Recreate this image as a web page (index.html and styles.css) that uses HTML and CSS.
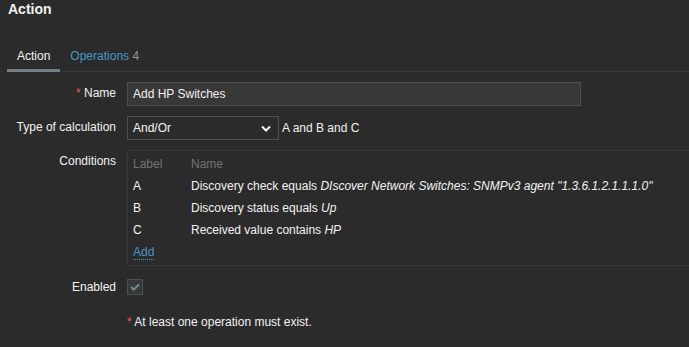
FILE: index.html
```html
<!DOCTYPE html>
<html lang="en">
<head>
    <meta charset="UTF-8">
    <title>Action</title>
    <link rel="stylesheet" href="styles.css">
</head>
<body>
    <h1 class="page-title">Action</h1>

    <ul class="tabs">
        <li class="tab active">Action</li>
        <li class="tab"><a href="#">Operations</a> <span class="count">4</span></li>
    </ul>

    <form class="action-form">
        <label class="form-label"><span class="req">*</span> Name</label>
        <div class="form-field">
            <input type="text" class="text-input" value="Add HP Switches">
        </div>

        <label class="form-label">Type of calculation</label>
        <div class="form-field inline">
            <div class="select-box">
                <span>And/Or</span>
                <svg class="chevron" width="10" height="7" viewBox="0 0 10 7"><path d="M1 1.5 L5 5.5 L9 1.5" fill="none" stroke="#f2f2f2" stroke-width="2"/></svg>
            </div>
            <span class="calc-formula">A and B and C</span>
        </div>

        <label class="form-label cond-label">Conditions</label>
        <div class="form-field">
            <div class="conditions">
                <table>
                    <tr class="head"><td class="col-label">Label</td><td>Name</td></tr>
                    <tr><td class="col-label">A</td><td>Discovery check equals <i>DIscover Network Switches: SNMPv3 agent "1.3.6.1.2.1.1.1.0"</i></td></tr>
                    <tr><td class="col-label">B</td><td>Discovery status equals <i>Up</i></td></tr>
                    <tr><td class="col-label">C</td><td>Received value contains <i>HP</i></td></tr>
                    <tr><td class="col-label"><a href="#" class="add-link">Add</a></td><td></td></tr>
                </table>
            </div>
        </div>

        <label class="form-label enabled-label">Enabled</label>
        <div class="form-field enabled-field">
            <span class="checkbox">
                <svg width="10" height="8" viewBox="0 0 10 8"><path d="M1 4 L3.8 6.6 L9 1.4" fill="none" stroke="#768d99" stroke-width="2"/></svg>
            </span>
        </div>

        <div></div>
        <div class="form-note"><span class="req">*</span> At least one operation must exist.</div>
    </form>
</body>
</html>
```

FILE: styles.css
```css
body {
    margin: 0;
    background-color: #2b2b2b;
    color: #f2f2f2;
    font-family: "Liberation Sans", Arial, sans-serif;
    font-size: 12px;
    width: 689px;
    height: 347px;
    overflow: hidden;
}
.page-title {
    margin: 0;
    padding: 0 8px;
    font-size: 14px;
    line-height: 18px;
    font-weight: bold;
    color: #f2f2f2;
}
.tabs {
    list-style: none;
    margin: 26px 0 0 7px;
    padding: 0;
    display: flex;
    border-bottom: 1px solid #383838;
}
.tab {
    padding: 4px 10px 5px;
    line-height: 16px;
    border-bottom: 3px solid transparent;
    margin-bottom: -1px;
}
.tab.active {
    border-bottom-color: #6f7f88;
}
.tab a {
    color: #4796c4;
    text-decoration: none;
}
.tab .count {
    color: #8a9499;
}
.action-form {
    display: grid;
    grid-template-columns: 116px 1fr;
    column-gap: 11px;
    row-gap: 10px;
    margin-top: 10px;
}
.form-label {
    text-align: right;
    line-height: 23px;
}
.req {
    color: #e45959;
}
.form-field.inline {
    display: flex;
    align-items: center;
    gap: 3px;
}
.text-input {
    box-sizing: border-box;
    width: 454px;
    height: 24px;
    margin: 0;
    padding: 0 5px;
    background-color: #383838;
    border: 1px solid #4f4f4f;
    color: #f2f2f2;
    font-family: inherit;
    font-size: 12px;
}
.select-box {
    box-sizing: border-box;
    width: 152px;
    height: 24px;
    padding: 0 7px 0 5px;
    background-color: #2b2b2b;
    border: 1px solid #4f4f4f;
    display: flex;
    align-items: center;
    justify-content: space-between;
}
.conditions {
    border: 1px solid #383838;
    border-right: none;
    padding: 2px 0 2px 5px;
}
.conditions table {
    border-collapse: collapse;
}
.conditions td {
    padding: 0;
    line-height: 22px;
    white-space: nowrap;
}
.conditions .col-label {
    width: 58px;
}
.conditions .head td {
    color: #737373;
}
.add-link {
    color: #4796c4;
    text-decoration: none;
    border-bottom: 1px dotted #4796c4;
}
.enabled-label {
    margin-top: 3px;
    line-height: 16px;
}
.enabled-field {
    margin-top: 3px;
}
.checkbox {
    box-sizing: border-box;
    width: 16px;
    height: 16px;
    border: 1px solid #4f4f4f;
    background-color: #383838;
    display: flex;
    align-items: center;
    justify-content: center;
}
.form-note {
    margin-top: 9px;
    line-height: 16px;
}
```
